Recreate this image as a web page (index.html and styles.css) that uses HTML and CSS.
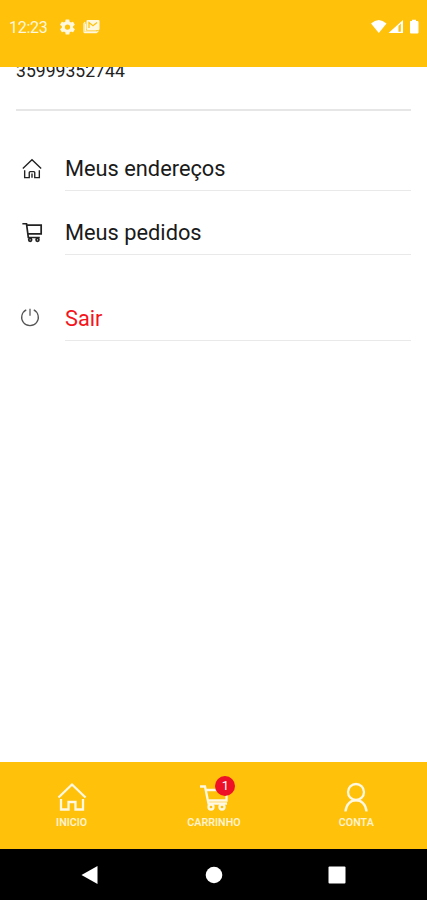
FILE: index.html
```html
<!DOCTYPE html>
<html lang="pt-BR">
	<head>
		<meta charset="utf-8">
		<title>Conta</title>
		<link rel="stylesheet" href="styles.css">
	</head>
	<body>
		<header class="status-bar">
			<span class="time">12:23</span>
			<svg class="gear" viewBox="2 2 20 20"><path fill-rule="evenodd" d="M19.4 13a7.500 7.500 0 0 0 0-2l2.100-1.600a.5.5 0 0 0 .1-.7l-2-3.400a.5.5 0 0 0-.6-.2l-2.500 1a7 7 0 0 0-1.700-1l-.4-2.700a.5.5 0 0 0-.5-.4h-4a.5.5 0 0 0-.5.4L9 5.100a7 7 0 0 0-1.700 1l-2.500-1a.5.5 0 0 0-.6.2l-2 3.400a.5.5 0 0 0 .1.700L4.500 11a7.500 7.500 0 0 0 0 2l-2.100 1.600a.5.5 0 0 0-.1.700l2 3.400c.1.200.4.300.6.200l2.500-1a7 7 0 0 0 1.700 1l.4 2.700c0 .2.200.4.500.4h4c.2 0 .5-.2.500-.4l.4-2.700a7 7 0 0 0 1.700-1l2.500 1c.2.100.5 0 .6-.2l2-3.400a.5.5 0 0 0-.1-.7zM12 15.500a3.500 3.500 0 1 1 0-7 3.500 3.500 0 0 1 0 7z"/></svg>
			<svg class="mail" viewBox="0 0 17 14">
				<path d="M4.500.5h11q1 0 1 1v8q0 1-1 1h-11q-1 0-1-1v-8q0-1 1-1z"/>
				<path class="mail-back" d="M2.200 2.500 1 4v8.200q0 1 1 1h11.500l2-2M2.500 4v7.700h11"/>
				<path class="mail-fold" d="M6 8.500V3l4 3.300L14 3"/>
			</svg>
			<svg class="signals" viewBox="0 0 50 16">
				<path d="M0 4.500Q7.800-2.500 15.500 4.500L7.800 14z"/>
				<path fill-rule="evenodd" d="M32 1v13H17.500zM27.500 7v5.700h2.300V4.500z"/>
				<path d="M39.500 2H41V.7h4V2h1.200q1.300 0 1.300 1v10.500q0 1-1 1h-6.500q-1 0-1-1V3q0-1 .5-1z"/>
			</svg>
		</header>

		<main class="account">
			<div class="phone">35999352744</div>
			<ul class="menu">
				<li class="menu-item">
					<svg class="icon" viewBox="0 0 24 24"><path d="M2 12.500 12 3l10 9.500M4 14.500v8h5V17q0-1 1-1h4q1 0 1 1v5.500h5v-8M12 18v4.500"/></svg>
					<span class="label">Meus endereços</span>
				</li>
				<li class="menu-item">
					<svg class="icon cart" viewBox="0 0 24 24"><path d="M1.500 3H6l2 15h12.500M6 4.500h16V14H7.500"/><circle cx="10" cy="20.500" r="1.600"/><circle cx="18" cy="20.500" r="1.600"/></svg>
					<span class="label">Meus pedidos</span>
				</li>
				<li class="menu-item logout">
					<svg class="icon power" viewBox="0 0 24 24"><path d="M7.500 3.500a10 10 0 1 0 9 0M12 2v8.500"/></svg>
					<span class="label">Sair</span>
				</li>
			</ul>
		</main>

		<nav class="tabs">
			<a class="tab">
				<svg viewBox="0 0 30 30"><path d="M1.500 15.500 15 2.500l13.500 13M4 17v10.500h7.500V20h7v7.500H26V17"/></svg>
				<span>INICIO</span>
			</a>
			<a class="tab">
				<svg viewBox="0 0 30 30"><path d="M1 4.500h5l3.500 17H28M7 8h21M8 18.500h19.500V9"/><circle cx="12" cy="25" r="2.500"/><circle cx="23" cy="25" r="2.500"/></svg>
				<b class="badge">1</b>
				<span>CARRINHO</span>
			</a>
			<a class="tab">
				<svg viewBox="0 0 30 30"><circle cx="15" cy="10" r="8"/><path d="M4.500 29.500C5.500 14.500 24.500 14.500 25.500 29.500"/></svg>
				<span>CONTA</span>
			</a>
		</nav>

		<footer class="system-nav">
			<svg viewBox="0 0 20 20"><path d="M1.500 10 17.500 1v18z"/></svg>
			<svg viewBox="0 0 20 20"><circle cx="10" cy="10" r="8.300"/></svg>
			<svg viewBox="0 0 20 20"><rect x="1.500" y="1.500" width="17" height="17" rx="1"/></svg>
		</footer>
	</body>
</html>
```
FILE: styles.css
```css
* {
	box-sizing: border-box;
}
body {
	margin: 0;
	height: 900px;
	display: flex;
	flex-direction: column;
	overflow: hidden;
	background: white;
	font-family: Roboto, sans-serif;
}

/* status bar */
.status-bar {
	height: 67px;
	flex: none;
	display: flex;
	align-items: flex-start;
	padding: 19px 6px 0 9px;
	background: #ffc10a;
	color: #fff8df;
}
.status-bar svg {
	fill: #fff8df;
}
.time {
	width: 51px;
	font-size: 16px;
	line-height: 18px;
	letter-spacing: -0.3px;
}
.gear {
	width: 15px;
	height: 16px;
}
.mail {
	width: 17px;
	height: 15px;
	margin-left: 8px;
}
.mail .mail-back,
.mail .mail-fold {
	fill: none;
	stroke: #fff8df;
	stroke-width: 1.2;
}
.mail .mail-fold {
	stroke: #ffc10a;
}
.signals {
	width: 50px;
	height: 16px;
	margin-left: auto;
}
.status-bar .signals {
	fill: white;
}

/* account */
.account {
	flex: 1;
	overflow: hidden;
	padding: 0 16px;
}
.phone {
	height: 54px;
	margin-top: -10px;
	border-bottom: 2px solid #e6e6e6;
	font-size: 17.6px;
	line-height: 28px;
	color: #222;
}
.menu {
	list-style: none;
	margin: 16px 0 0;
	padding: 0;
}
.menu-item {
	height: 64px;
	display: flex;
	align-items: flex-end;
}
.icon {
	width: 22px;
	height: 22px;
	margin: 0 22px 12px 5px;
	fill: none;
	stroke: #222;
	stroke-width: 1.5;
}
.cart {
	stroke-width: 1.9;
}
.power {
	width: 20px;
	height: 20px;
	margin: 0 25px 14px 4px;
	stroke: #555;
}
.label {
	flex: 1;
	height: 45px;
	border-bottom: 1px solid #e9e9e9;
	font-size: 21.8px;
	line-height: 45px;
	color: #1a1a1a;
}
.logout {
	margin-top: 22px;
}
.logout .label {
	color: #f5141c;
}

/* bottom tabs */
.tabs {
	height: 87px;
	display: flex;
	background: #ffc10a;
}
.tab {
	flex: 1;
	position: relative;
	display: flex;
	flex-direction: column;
	align-items: center;
	padding: 20px 0 0 1px;
	font-size: 10.7px;
	font-weight: 500;
	line-height: 14px;
	color: #fff3cf;
}
.tab svg {
	width: 30px;
	height: 30px;
	margin-bottom: 4px;
	fill: none;
	stroke: #fff8e2;
	stroke-width: 2.3;
}
.tab span {
	font-weight: 600;
}
.badge {
	position: absolute;
	top: 14px;
	left: calc(50% + 2px);
	width: 20px;
	height: 20px;
	border-radius: 50%;
	background: #ed1027;
	color: white;
	font-size: 13px;
	font-weight: 400;
	line-height: 20px;
	text-align: center;
}

/* android buttons */
.system-nav {
	height: 51px;
	display: flex;
	justify-content: space-between;
	align-items: center;
	padding: 0 80px;
	background: black;
}
.system-nav svg {
	width: 20px;
	height: 20px;
	fill: white;
}
```
